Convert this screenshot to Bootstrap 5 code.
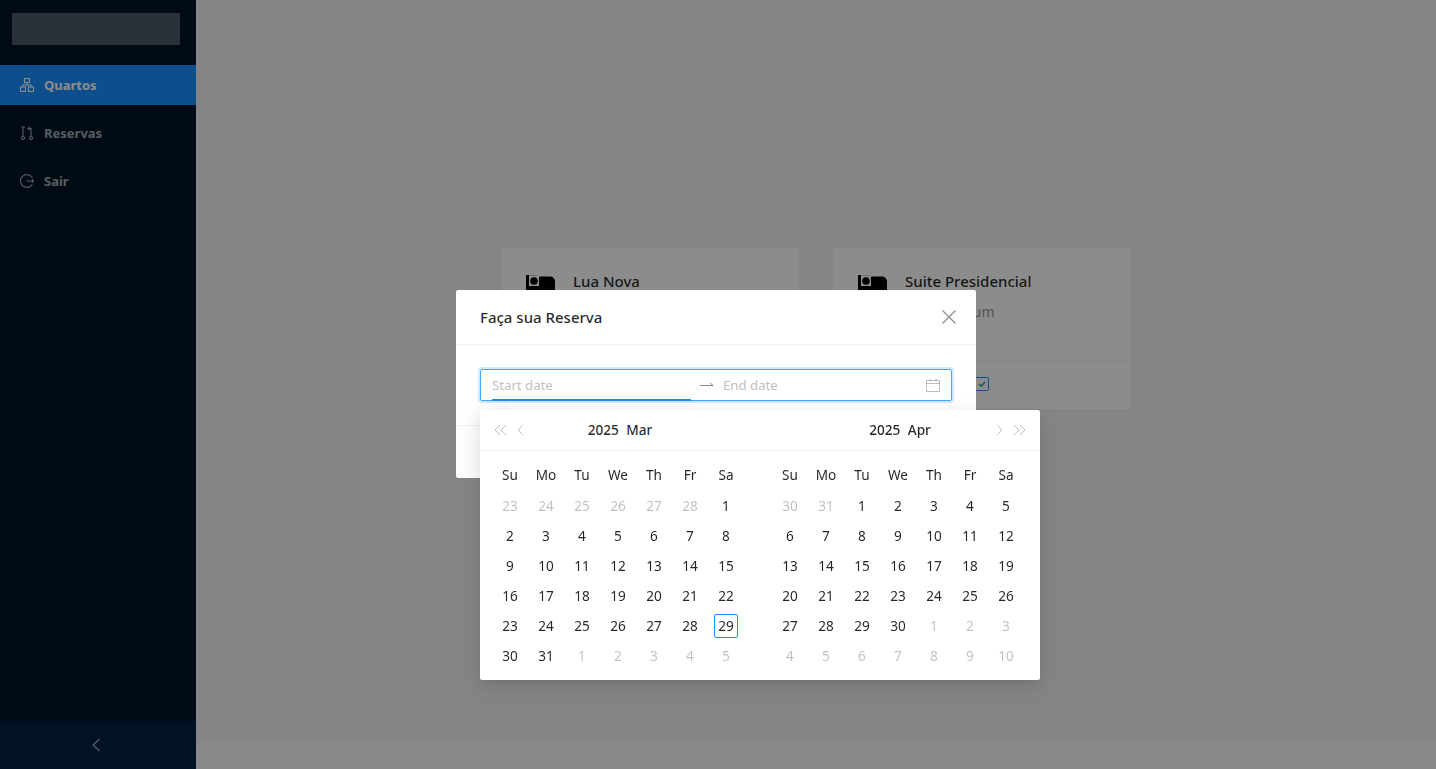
<!DOCTYPE html>
<html lang="pt">

<head>
    <meta charset="UTF-8">
    <meta name="viewport" content="width=device-width, initial-scale=1.0">
    <title>Quartos</title>
    <link href="https://cdn.jsdelivr.net/npm/bootstrap@5.3.0/dist/css/bootstrap.min.css" rel="stylesheet">
    <style>
        body {
            background-color: #f0f2f5;
            color: rgba(0, 0, 0, .85);
            font-family: "Noto Sans", "Liberation Sans", sans-serif;
            font-size: 14px;
            height: 769px;
            overflow: hidden;
        }

        /* Sidebar */
        .side-nav {
            width: 196px;
            height: 769px;
            background: #001529;
        }

        .side-logo {
            height: 32px;
            margin: 13px 16px 20px 12px;
            background: rgba(255, 255, 255, .3);
        }

        .side-item {
            height: 40px;
            margin-bottom: 8px;
            padding-left: 20px;
            gap: 10px;
            color: rgba(255, 255, 255, .65);
            font-weight: 700;
            font-size: 13px;
        }

        .side-item span {
            padding-top: 2px;
        }

        .side-item.active-item {
            background: #1890ff;
            color: #fff;
        }

        .side-trigger {
            height: 48px;
            padding-right: 4px;
            background: #002140;
            color: rgba(255, 255, 255, .65);
        }

        /* Page body with the two room cards */
        .room-area {
            padding-top: 248px;
            gap: 34px;
        }

        .room-card {
            width: 298px;
            height: 161px;
            background: #fff;
        }

        .room-top {
            padding: 24px 24px 0;
            height: 114px;
            gap: 18px;
            border-bottom: 1px solid #f0f0f0;
        }

        .bed-icon {
            margin: 3px 0 0 1px;
        }

        .room-title {
            font-size: 15px;
            font-weight: 500;
            line-height: 20px;
            margin: -1px 0 11px;
        }

        .room-desc {
            color: rgba(0, 0, 0, .45);
            letter-spacing: .3px;
            line-height: 20px;
        }

        .room-action {
            height: 47px;
            padding-bottom: 3px;
            color: #1890ff;
        }

        .page-foot {
            height: 28px;
            background: #f7f7f7;
        }

        /* Modal */
        .dim-layer {
            position: fixed;
            inset: 0;
            background: rgba(0, 0, 0, .45);
        }

        .booking-modal {
            position: absolute;
            left: 456px;
            top: 290px;
            width: 520px;
            height: 188px;
            border: 0;
            border-radius: 2px;
            background: #fff;
        }

        .booking-modal .modal-header {
            height: 55px;
            padding: 0 24px;
            border-bottom: 1px solid #f0f0f0;
            border-radius: 0;
        }

        .booking-modal .modal-title {
            font-size: 15px;
            font-weight: 500;
            line-height: 22px;
        }

        .close-x {
            width: 16px;
            height: 16px;
            color: rgba(0, 0, 0, .45);
            margin-right: -5px;
        }

        .booking-modal .modal-body {
            padding: 24px;
            height: 80px;
        }

        .booking-modal .modal-footer {
            height: 53px;
            border-top: 1px solid #f0f0f0;
            border-radius: 0;
        }

        /* Range picker */
        .range-input {
            position: relative;
            height: 32px;
            padding: 0 11px;
            border: 1px solid #40a9ff;
            border-radius: 2px;
            box-shadow: 0 0 0 2px rgba(24, 144, 255, .2);
        }

        .range-input input {
            width: 199px;
            border: 0;
            padding: 0;
            outline: 0;
            background: none;
            font: inherit;
            font-size: 13.2px;
            height: 30px;
        }

        .range-input input::placeholder {
            color: #bfbfbf;
            opacity: 1;
        }

        .range-sep {
            width: 32px;
            padding-left: 8px;
            color: rgba(0, 0, 0, .45);
        }

        .range-suffix {
            width: 18px;
            padding-left: 4px;
            color: rgba(0, 0, 0, .25);
        }

        .active-bar {
            position: absolute;
            left: 11px;
            bottom: -1px;
            width: 199px;
            height: 2px;
            background: #1890ff;
        }

        .cal-arrow {
            position: absolute;
            left: 18px;
            top: 33px;
            width: 0;
            height: 0;
            border: 6px solid transparent;
            border-top: 0;
            border-bottom-color: #fbfbfb;
        }

        .cal-drop {
            position: absolute;
            left: -1px;
            top: 40px;
            width: 560px;
            height: 270px;
            background: #fff;
            border-radius: 2px;
            font-size: 13.6px;
            box-shadow: 0 3px 6px -4px rgba(0, 0, 0, .12), 0 6px 16px 0 rgba(0, 0, 0, .08), 0 9px 28px 8px rgba(0, 0, 0, .05);
        }

        .cal-panel {
            width: 280px;
        }

        .cal-head {
            height: 41px;
            padding: 0 13px;
            border-bottom: 1px solid #f0f0f0;
            color: rgba(0, 0, 0, .25);
        }

        .cal-title {
            position: absolute;
            left: 0;
            right: 0;
            top: 10px;
            text-align: center;
            font-weight: 500;
            line-height: 20px;
            color: rgba(0, 0, 0, .85);
            word-spacing: 4px;
        }

        .cal-grid {
            display: grid;
            grid-template-columns: repeat(7, 36px);
            grid-template-rows: 31px;
            grid-auto-rows: 30px;
            padding: 9px 12px 0;
            text-align: center;
            line-height: 30px;
        }

        .cal-grid .other-month {
            color: rgba(0, 0, 0, .25);
        }

        .today-box {
            display: inline-block;
            width: 24px;
            height: 24px;
            line-height: 22px;
            border: 1px solid #1890ff;
            border-radius: 2px;
        }
    </style>
</head>

<body>
    <div class="d-flex">
        <aside class="side-nav d-flex flex-column flex-shrink-0">
            <div class="side-logo"></div>
            <div class="flex-grow-1">
                <div class="side-item active-item d-flex align-items-center">
                    <svg width="14" height="14" viewBox="0 0 14 14" fill="none" stroke="currentColor" stroke-width="1.1">
                        <rect x="4.5" y=".5" width="5" height="4" />
                        <rect x=".5" y="9" width="5" height="4.5" />
                        <rect x="8.5" y="9" width="5" height="4.5" />
                        <path d="M7 4.5V7M3 9V7h8v2" />
                    </svg>
                    <span>Quartos</span>
                </div>
                <div class="side-item d-flex align-items-center">
                    <svg width="14" height="14" viewBox="0 0 14 14" fill="none" stroke="currentColor" stroke-width="1.1">
                        <circle cx="3" cy="12" r="1.5" />
                        <circle cx="11" cy="12" r="1.5" />
                        <path d="M3 10.5V1H1.5M3 1h2M11 10.5V2.5H8M9.5 1 8 2.5 9.5 4" />
                    </svg>
                    <span>Reservas</span>
                </div>
                <div class="side-item d-flex align-items-center">
                    <svg width="14" height="14" viewBox="0 0 14 14" fill="none" stroke="currentColor" stroke-width="1.1">
                        <path d="M12.4 3.8A6.4 6.4 0 1 0 12.4 10.2" />
                        <path d="M6.5 7h7.5M12 5.5 13.5 7 12 8.5" />
                    </svg>
                    <span>Sair</span>
                </div>
            </div>
            <div class="side-trigger d-flex align-items-center justify-content-center">
                <svg width="10" height="14" viewBox="0 0 10 14" fill="none" stroke="currentColor" stroke-width="1.2">
                    <path d="M8.5 1 2 7l6.5 6" />
                </svg>
            </div>
        </aside>

        <main class="flex-grow-1 d-flex flex-column" style="height:769px">
            <div class="room-area flex-grow-1 d-flex justify-content-center">
                <div class="room-card">
                    <div class="room-top d-flex">
                        <svg class="bed-icon flex-shrink-0" width="29" height="22" viewBox="0 0 29 22" fill="#000">
                            <path d="M0 0h3v11h10V2.5a1 1 0 0 1 1-1h10a5 5 0 0 1 5 5V22H0z" />
                            <path d="M3 0h9v.5H3z" fill="#999" />
                            <circle cx="8" cy="6" r="3.8" />
                        </svg>
                        <div>
                            <div class="room-title">Lua Nova</div>
                            <div class="room-desc">Lorem ipsum</div>
                        </div>
                    </div>
                    <div class="room-action d-flex align-items-center justify-content-center">
                        <svg width="14" height="14" viewBox="0 0 14 14" fill="none" stroke="currentColor">
                            <rect x=".5" y=".5" width="13" height="13" rx="1" />
                            <path d="m4 7 2.2 2.3L10 5" stroke-width="1.3" />
                        </svg>
                    </div>
                </div>
                <div class="room-card">
                    <div class="room-top d-flex">
                        <svg class="bed-icon flex-shrink-0" width="29" height="22" viewBox="0 0 29 22" fill="#000">
                            <path d="M0 0h3v11h10V2.5a1 1 0 0 1 1-1h10a5 5 0 0 1 5 5V22H0z" />
                            <path d="M3 0h9v.5H3z" fill="#999" />
                            <circle cx="8" cy="6" r="3.8" />
                        </svg>
                        <div>
                            <div class="room-title">Suite Presidencial</div>
                            <div class="room-desc">Lorem ipsum</div>
                        </div>
                    </div>
                    <div class="room-action d-flex align-items-center justify-content-center">
                        <svg width="14" height="14" viewBox="0 0 14 14" fill="none" stroke="currentColor">
                            <rect x=".5" y=".5" width="13" height="13" rx="1" />
                            <path d="m4 7 2.2 2.3L10 5" stroke-width="1.3" />
                        </svg>
                    </div>
                </div>
            </div>
            <div class="page-foot"></div>
        </main>
    </div>

    <div class="dim-layer">
        <div class="booking-modal modal-content">
            <div class="modal-header">
                <h5 class="modal-title">Faça sua Reserva</h5>
                <svg class="close-x ms-auto" viewBox="0 0 16 16" fill="none" stroke="currentColor" stroke-width="1.2">
                    <path d="M1.5 1.5l13 13M14.5 1.5l-13 13" />
                </svg>
            </div>
            <div class="modal-body position-relative">
                <div class="range-input d-flex align-items-center">
                    <input type="text" placeholder="Start date" readonly>
                    <div class="range-sep d-flex">
                        <svg width="15" height="10" viewBox="0 0 15 10" fill="none" stroke="currentColor">
                            <path d="M1 5.5h13L11 3" />
                        </svg>
                    </div>
                    <input type="text" placeholder="End date" readonly>
                    <div class="range-suffix d-flex">
                        <svg width="14" height="14" viewBox="0 0 14 14" fill="none" stroke="currentColor">
                            <path d="M.5 2.5h13v11H.5zM.5 5.5h13M4 .5v3M10 .5v3" />
                        </svg>
                    </div>
                    <div class="active-bar"></div>
                    <div class="cal-arrow"></div>
                    <div class="cal-drop d-flex">
                        <div class="cal-panel position-relative">
                            <div class="cal-head d-flex align-items-center gap-2">
                                <svg width="15" height="12" viewBox="0 0 15 12" fill="none" stroke="currentColor">
                                    <path d="M7 1 2 6l5 5M13 1 8 6l5 5" />
                                </svg>
                                <svg width="8" height="12" viewBox="0 0 8 12" fill="none" stroke="currentColor">
                                    <path d="M7 1 2 6l5 5" />
                                </svg>
                            </div>
                            <div class="cal-title">2025 Mar</div>
                            <div class="cal-grid" id="calMar"></div>
                        </div>
                        <div class="cal-panel position-relative">
                            <div class="cal-head d-flex align-items-center justify-content-end gap-2">
                                <svg width="8" height="12" viewBox="0 0 8 12" fill="none" stroke="currentColor">
                                    <path d="M1 1l5 5-5 5" />
                                </svg>
                                <svg width="15" height="12" viewBox="0 0 15 12" fill="none" stroke="currentColor">
                                    <path d="M2 1l5 5-5 5M8 1l5 5-5 5" />
                                </svg>
                            </div>
                            <div class="cal-title">2025 Apr</div>
                            <div class="cal-grid" id="calApr"></div>
                        </div>
                    </div>
                </div>
            </div>
            <div class="modal-footer"></div>
        </div>
    </div>

    <script src="https://cdn.jsdelivr.net/npm/bootstrap@5.3.0/dist/js/bootstrap.bundle.min.js"></script>
    <script>
        // Fill one month: days before/after the month are greyed out
        function fillMonth(id, prevStart, prevCount, days, today) {
            const grid = document.getElementById(id);
            let html = ["Su", "Mo", "Tu", "We", "Th", "Fr", "Sa"]
                .map(d => `<div>${d}</div>`).join("");
            for (let i = 0; i < prevCount; i++) {
                html += `<div class="other-month">${prevStart + i}</div>`;
            }
            for (let d = 1; d <= days; d++) {
                html += d === today ? `<div><span class="today-box">${d}</span></div>` : `<div>${d}</div>`;
            }
            for (let d = 1; prevCount + days + d <= 42; d++) {
                html += `<div class="other-month">${d}</div>`;
            }
            grid.innerHTML = html;
        }

        fillMonth("calMar", 23, 6, 31, 29);
        fillMonth("calApr", 30, 2, 30, 0);
    </script>
</body>

</html>
